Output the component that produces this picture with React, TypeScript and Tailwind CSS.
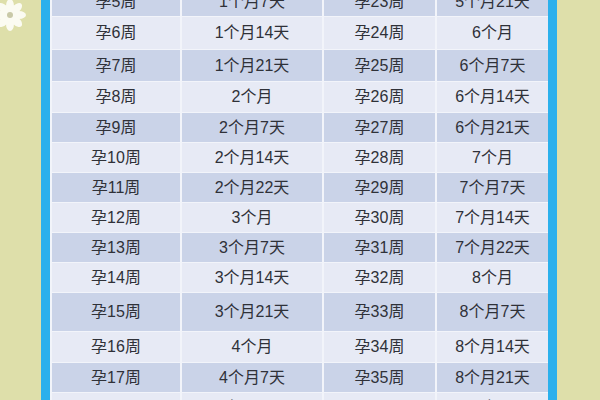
const rows = [
  { h: "h-[29px]", a: "孕5周", b: "1个月7天", c: "孕23周", d: "5个月21天", dark: true },
  { h: "h-[32px]", a: "孕6周", b: "1个月14天", c: "孕24周", d: "6个月", dark: false },
  { h: "h-[31px]", a: "孕7周", b: "1个月21天", c: "孕25周", d: "6个月7天", dark: true },
  { h: "h-[30px]", a: "孕8周", b: "2个月", c: "孕26周", d: "6个月14天", dark: false },
  { h: "h-[29px]", a: "孕9周", b: "2个月7天", c: "孕27周", d: "6个月21天", dark: true },
  { h: "h-[29px]", a: "孕10周", b: "2个月14天", c: "孕28周", d: "7个月", dark: false },
  { h: "h-[29px]", a: "孕11周", b: "2个月22天", c: "孕29周", d: "7个月7天", dark: true },
  { h: "h-[29px]", a: "孕12周", b: "3个月", c: "孕30周", d: "7个月14天", dark: false },
  { h: "h-[29px]", a: "孕13周", b: "3个月7天", c: "孕31周", d: "7个月22天", dark: true },
  { h: "h-[29px]", a: "孕14周", b: "3个月14天", c: "孕32周", d: "8个月", dark: false },
  { h: "h-[38px]", a: "孕15周", b: "3个月21天", c: "孕33周", d: "8个月7天", dark: true },
  { h: "h-[30px]", a: "孕16周", b: "4个月", c: "孕34周", d: "8个月14天", dark: false },
  { h: "h-[29px]", a: "孕17周", b: "4个月7天", c: "孕35周", d: "8个月21天", dark: true },
  { h: "h-[29px]", a: "孕18周", b: "4个月14天", c: "孕36周", d: "9个月", dark: false },
];

function Flower() {
  const petals = [0, 45, 90, 135, 180, 225, 270, 315];
  return (
    <svg className="absolute left-[-6px] top-[-2px]" width="32" height="34" viewBox="-16 -17 32 34">
      {petals.map((r) => (
        <ellipse key={r} cx="0" cy="-9" rx="4" ry="7" fill="#fbfbf2" transform={`rotate(${r})`} />
      ))}
      <circle cx="0" cy="0" r="3" fill="#c9c9a8" />
    </svg>
  );
}

export default function App() {
  return (
    <div
      className="relative flex h-[400px] w-[600px] overflow-hidden bg-[#dedfaa] text-[16px] text-[#2f3138]"
      style={{ fontFamily: '"Liberation Sans", "Noto Sans CJK SC", sans-serif' }}
    >
      <Flower />
      <div className="w-[41px] shrink-0" />
      <div className="w-[9px] shrink-0 bg-[#2bb0ec]" />
      <div className="w-[498px] shrink-0 bg-[#f2f4fa] px-[2px]">
        <div className="-mt-[13px] flex flex-col gap-[1px]">
          {rows.map((r) => (
            <div key={r.a} className={`grid grid-cols-[128px_140px_111px_111px] gap-[2px] ${r.h}`}>
              {[r.a, r.b, r.c, r.d].map((t, i) => (
                <div
                  key={i}
                  className={`flex items-center justify-center ${r.dark ? "bg-[#cad3e8]" : "bg-[#e7eaf5]"}`}
                >
                  {t}
                </div>
              ))}
            </div>
          ))}
        </div>
      </div>
      <div className="w-[9px] shrink-0 bg-[#2bb0ec]" />
      <div className="flex-1" />
    </div>
  );
}
